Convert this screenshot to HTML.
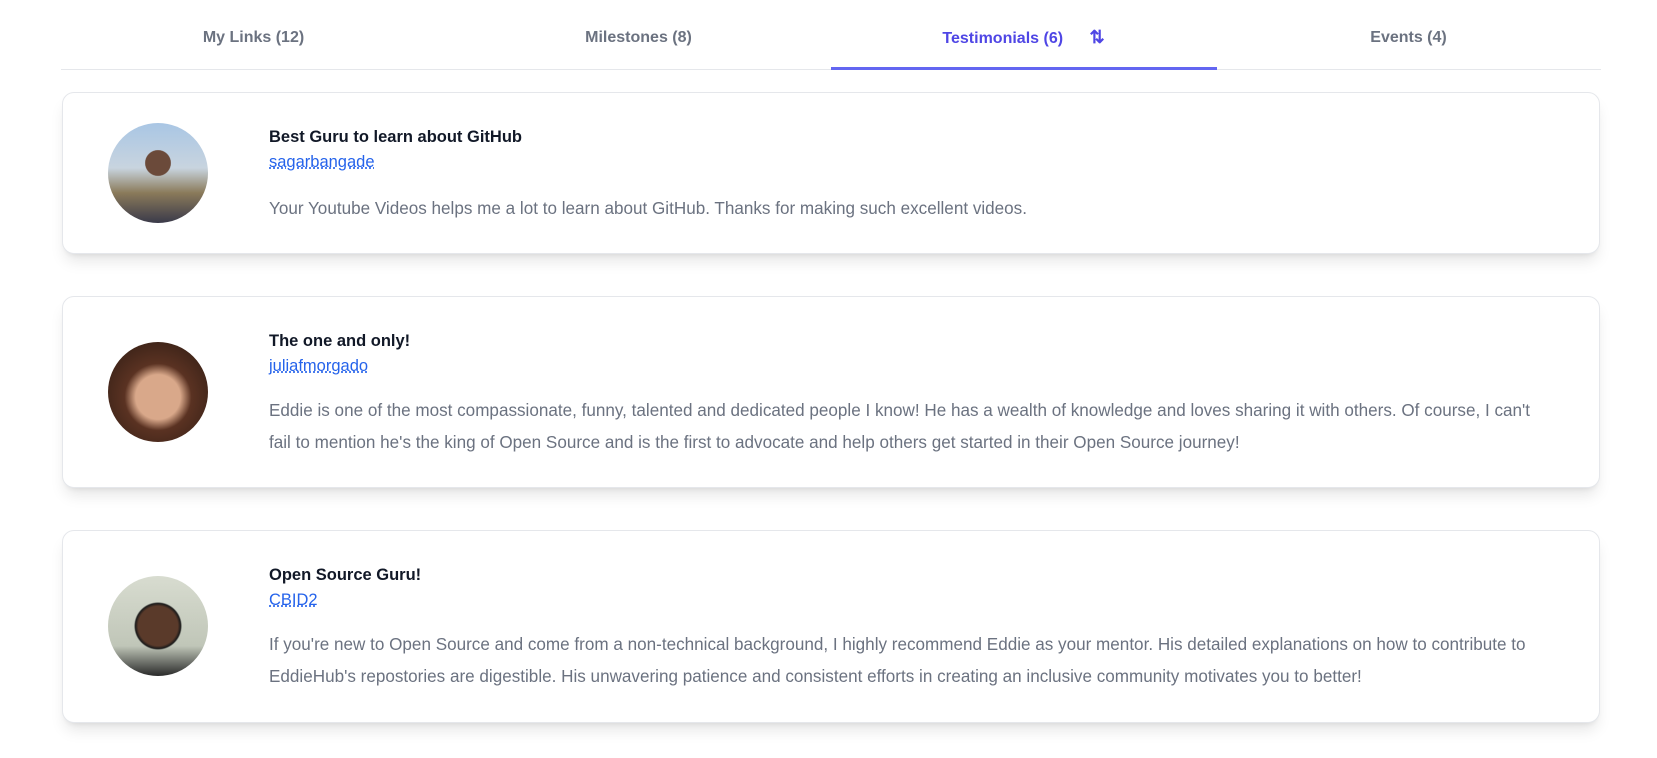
<!DOCTYPE html>
<html><head><meta charset="utf-8"><style>
*{box-sizing:border-box;margin:0;padding:0}
body{width:1657px;height:758px;background:#fff;font-family:"Liberation Sans",sans-serif;position:relative;overflow:hidden}
.tabs{position:absolute;left:61px;top:0;width:1540px;height:70px;border-bottom:1px solid #e5e7eb}
.tab{position:absolute;top:28px;height:20px;font-size:16px;line-height:20px;font-weight:bold;color:#6b7280;text-align:center;width:385px;white-space:nowrap}
.act{color:#4f46e5;top:29px}
.ul{position:absolute;left:831px;top:67px;width:386px;height:3px;background:#6366f1}
.card{position:absolute;left:62px;width:1538px;border:1px solid #e5e7eb;border-radius:12px;background:#fff;box-shadow:0 10px 15px -3px rgba(0,0,0,.1),0 4px 6px -4px rgba(0,0,0,.1)}
.av{position:absolute;left:45px;width:100px;height:100px;border-radius:50%}
.t{position:absolute;left:206px;font-size:16.5px;font-weight:bold;color:#111827}
.u{position:absolute;left:206px;font-size:16.5px;color:#2563eb;text-decoration:underline dotted}
.d{position:absolute;left:206px;right:50px;font-size:17.1px;line-height:31.5px;color:#6b7280}
</style></head><body>
<div class="tabs">
<div class="tab" style="left:0">My Links (12)</div>
<div class="tab" style="left:385px">Milestones (8)</div>
<div class="tab act" style="left:770px">Testimonials (6) <span style="margin-left:22px;font-size:18px;line-height:16px;vertical-align:top">⇅</span></div>
<div class="tab" style="left:1155px">Events (4)</div>
</div>
<div class="ul"></div>

<div class="card" style="top:92px;height:162px">
<div class="av" style="top:30px;background:radial-gradient(circle at 50% 40%,#6b4a3a 0 16%,transparent 17%),linear-gradient(180deg,#a9c6e4 0%,#c8d4df 45%,#8a7a5a 70%,#3a3a4a 100%)"></div>
<div class="t" style="top:35px">Best Guru to learn about GitHub</div>
<div class="u" style="top:60px">sagarbangade</div>
<div class="d" style="top:100px">Your Youtube Videos helps me a lot to learn about GitHub. Thanks for making such excellent videos.</div>
</div>

<div class="card" style="top:296px;height:192px">
<div class="av" style="top:45px;background:radial-gradient(circle at 50% 55%,#d9a88a 0 30%,#5a3222 45%,#2a1a12 100%)"></div>
<div class="t" style="top:35px">The one and only!</div>
<div class="u" style="top:60px">juliafmorgado</div>
<div class="d" style="top:98px">Eddie is one of the most compassionate, funny, talented and dedicated people I know! He has a wealth of knowledge and loves sharing it with others. Of course, I can't fail to mention he's the king of Open Source and is the first to advocate and help others get started in their Open Source journey!</div>
</div>

<div class="card" style="top:530px;height:193px">
<div class="av" style="top:45px;background:radial-gradient(circle at 50% 50%,#5a3a2a 0 28%,#1a1a1a 32%,transparent 34%),linear-gradient(180deg,#d8dcd0,#c0c6b8 70%,#2a2a2a 100%)"></div>
<div class="t" style="top:35px">Open Source Guru!</div>
<div class="u" style="top:60px">CBID2</div>
<div class="d" style="top:98px">If you're new to Open Source and come from a non-technical background, I highly recommend Eddie as your mentor. His detailed explanations on how to contribute to EddieHub's repostories are digestible. His unwavering patience and consistent efforts in creating an inclusive community motivates you to better!</div>
</div>
</body></html>
